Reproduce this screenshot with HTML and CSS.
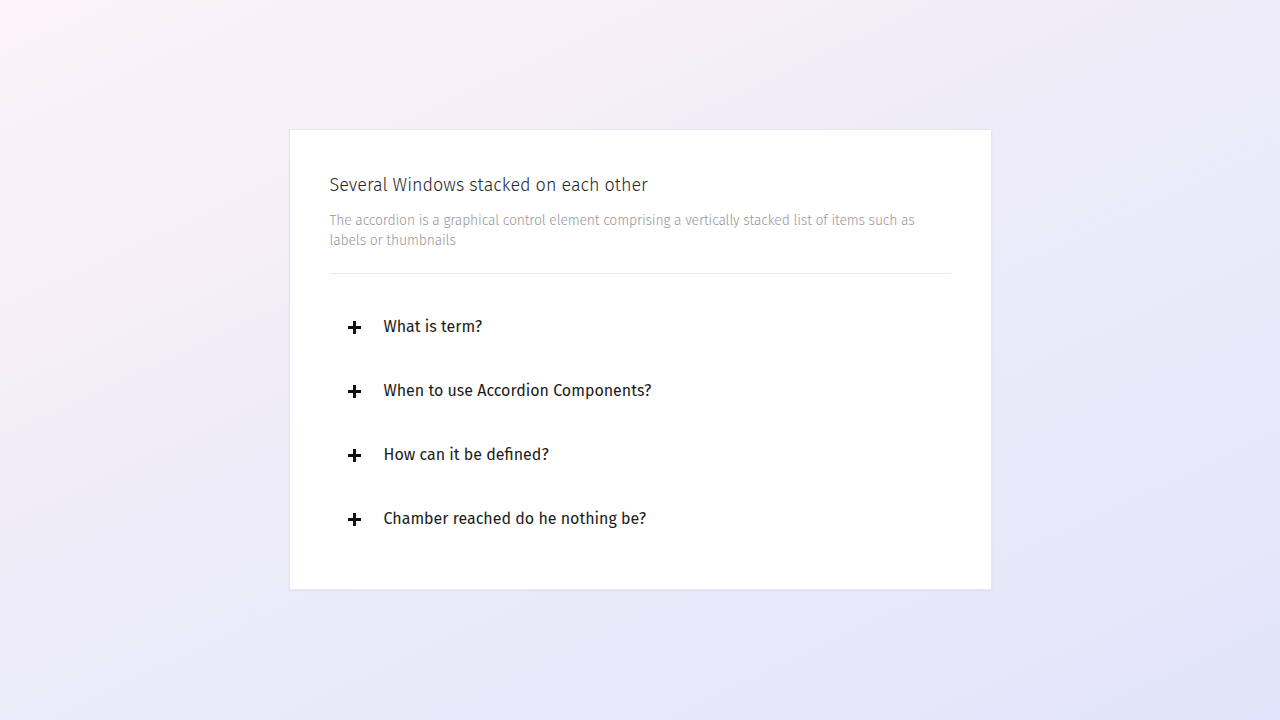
FILE: index.html
```html
<!DOCTYPE html>
<html lang="en">
<head>
    <meta charset="UTF-8">
    <meta name="viewport" content="width=device-width, initial-scale=1.0">
    <title>Accordion</title>
    <link rel="stylesheet" href="styles.css">
</head>
<body>
    <div class="card">
        <h1>Several Windows stacked on each other</h1>
        <p class="lead">The accordion is a graphical control element comprising a vertically stacked list of items such as labels or thumbnails</p>

        <ul class="accordion">
            <li class="acc-item">
                <span class="plus"></span>
                <span class="acc-title">What is term?</span>
            </li>
            <li class="acc-item">
                <span class="plus"></span>
                <span class="acc-title">When to use Accordion Components?</span>
            </li>
            <li class="acc-item">
                <span class="plus"></span>
                <span class="acc-title">How can it be defined?</span>
            </li>
            <li class="acc-item">
                <span class="plus"></span>
                <span class="acc-title">Chamber reached do he nothing be?</span>
            </li>
        </ul>
    </div>
</body>
</html>
```

FILE: styles.css
```css
body {
    font-family: 'Fira Sans', 'Lato', sans-serif;
    margin: 0;
    min-height: 100vh;
    background: linear-gradient(155deg, #fdf3f8 0%, #eeecf8 45%, #e1e5fb 100%);
    display: flex;
    justify-content: center;
    align-items: flex-start;
}

.card {
    background: #fff;
    width: 621px;
    margin-top: 129px;
    padding: 41px 40px 38px;
    border: 1px solid #e6e4ee;
    box-shadow: 0 1px 2px rgba(0, 0, 0, 0.04);
}

h1 {
    margin: 0;
    font-size: 18px;
    font-weight: 300;
    line-height: 28px;
    color: #25262c;
}

.lead {
    margin: 12px 0 0;
    padding-bottom: 22px;
    border-bottom: 1px solid #e9e9ee;
    font-size: 14px;
    font-weight: 300;
    letter-spacing: -0.17px;
    line-height: 20px;
    color: #98989c;
}

.accordion {
    list-style: none;
    margin: 21px 0 0;
    padding: 0;
}

.acc-item {
    display: flex;
    align-items: center;
    height: 64px;
    padding-left: 18px;
    cursor: pointer;
}

.plus {
    position: relative;
    width: 13px;
    height: 13px;
    margin-right: 23px;
    flex-shrink: 0;
}

.plus::before,
.plus::after {
    content: '';
    position: absolute;
    background: #111;
}

.plus::before {
    left: 0;
    top: 5px;
    width: 13px;
    height: 3px;
}

.plus::after {
    left: 5px;
    top: 0;
    width: 3px;
    height: 13px;
}

.acc-title {
    font-size: 16px;
    line-height: 24px;
    color: #1c1c20;
}
```
